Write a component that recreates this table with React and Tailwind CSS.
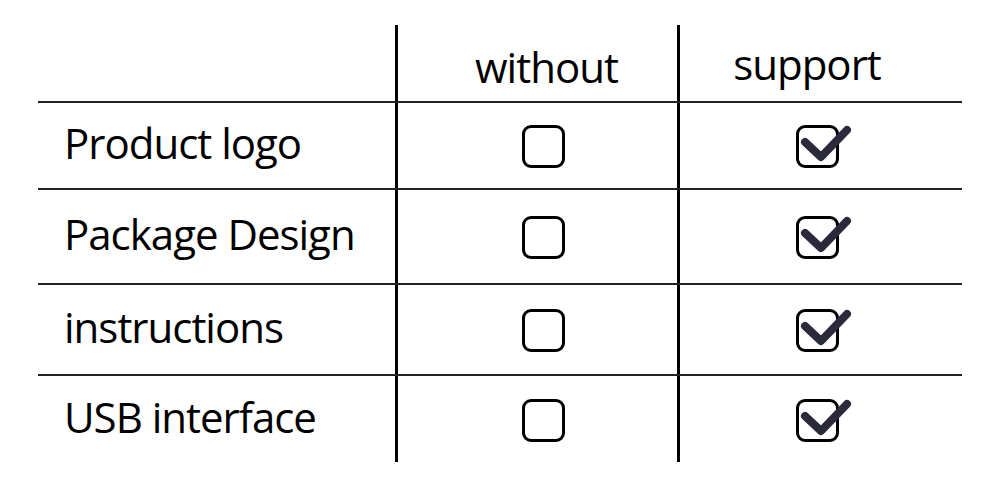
import React from "react";

const rows = [
  { label: "Product logo", h: "h-[87px]" },
  { label: "Package Design", h: "h-[95px]" },
  { label: "instructions", h: "h-[91px]" },
  { label: "USB interface", h: "h-[88px]" },
];

function Box({ checked }) {
  return (
    <div className="relative h-[43px] w-[43px] rounded-[9px] border-[3px] border-black">
      {checked && (
        <svg
          className="absolute -left-[3px] -top-[3px] overflow-visible"
          width="56"
          height="43"
          viewBox="0 0 56 43"
        >
          <path
            d="M9 17 L25 32 L51 5"
            fill="none"
            stroke="#2b2a3a"
            strokeWidth="8"
            strokeLinecap="round"
            strokeLinejoin="round"
          />
        </svg>
      )}
    </div>
  );
}

export default function App() {
  return (
    <div
      className="h-[500px] w-[1000px] bg-white pl-[38px] pt-[25px] text-black"
      style={{ fontFamily: "'Open Sans', 'Noto Sans', sans-serif" }}
    >
      <div className="w-[924px]">
        {/* header */}
        <div className="grid h-[76px] grid-cols-[357px_282px_285px]">
          <div />
          <div className="flex items-center justify-center border-l-[3px] border-black pl-[18px] pt-[6px] text-[42px] font-medium tracking-[-1px]">
            without
          </div>
          <div className="flex items-center justify-center border-l-[3px] border-black pr-[28px] text-[42px] font-medium tracking-[-1px]">
            support
          </div>
        </div>

        {rows.map((r) => (
          <div
            key={r.label}
            className={`grid grid-cols-[357px_282px_285px] border-t-2 border-[#222] ${r.h}`}
          >
            <div className="flex items-center pb-[6px] pl-[26px] text-[42px] font-medium tracking-[-1px]">
              {r.label}
            </div>
            <div className="flex items-center justify-center border-l-[3px] border-black pl-[12px] pt-[2px]">
              <Box />
            </div>
            <div className="flex items-center justify-center border-l-[3px] border-black pr-[8px] pt-[2px]">
              <Box checked />
            </div>
          </div>
        ))}
      </div>
    </div>
  );
}
